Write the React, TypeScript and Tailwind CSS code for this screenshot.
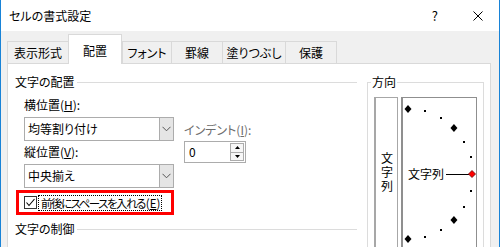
import React from "react";

const Tab = ({ w, label, selected }: { w: string; label: string; selected?: boolean }) =>
  selected ? (
    <div className={`${w} h-[30px] -mb-px bg-white border-x border-t border-[#d9d9d9] flex items-end justify-center pb-[5px]`}>
      {label}
    </div>
  ) : (
    <div className={`${w} h-[22px] bg-[#f0f0f0] border-l border-t border-[#d9d9d9] flex items-center justify-center`}>
      {label}
    </div>
  );

const Chevron = () => (
  <svg width="9" height="6" viewBox="0 0 9 6">
    <polyline points="0.5,0.8 4.5,4.8 8.5,0.8" fill="none" stroke="#555" strokeWidth="1" />
  </svg>
);

const Dropdown = ({ value }: { value: string }) => (
  <div className="h-[24px] w-[150px] border border-[#acacac] bg-white flex">
    <div className="flex-1 flex items-center pl-[3px]">{value}</div>
    <div className="w-[14px] bg-[#e5e5e5] border-l border-[#acacac] flex items-center justify-center">
      <Chevron />
    </div>
  </div>
);

const Gauge = () => {
  const cx = 5;
  const cy = 76;
  const r = 65;
  const items: React.ReactNode[] = [];
  for (let a = 90; a >= -90; a -= 15) {
    const rad = (a * Math.PI) / 180;
    const x = cx + r * Math.cos(rad);
    const y = cy - r * Math.sin(rad);
    if (a === 0) continue;
    if (a % 45 === 0) {
      items.push(
        <polygon
          key={a}
          points={`${x},${y - 4} ${x + 3.5},${y} ${x},${y + 4} ${x - 3.5},${y}`}
          fill="#000"
        />
      );
    } else {
      items.push(<rect key={a} x={Math.round(x) - 1} y={Math.round(y) - 1} width="2" height="2" fill="#000" />);
    }
  }
  return (
    <svg className="absolute left-0 top-0" width="74" height="160" viewBox="0 0 74 160">
      {items}
      <line x1="43" y1="76.5" x2="66" y2="76.5" stroke="#000" strokeWidth="1" />
      <polygon points="69,72.5 72.5,76 69,79.5 65.5,76" fill="#ff0000" stroke="#600" strokeWidth="0.8" />
    </svg>
  );
};

export default function App() {
  return (
    <div className="w-[500px] h-[247px] overflow-hidden bg-[#f0f0f0] border-x border-[#1883d7] flex flex-col font-['Noto_Sans_CJK_JP','Noto_Sans',sans-serif] text-[12px] leading-[16px] text-black [font-feature-settings:'palt']">
      {/* title bar */}
      <div className="h-[31px] shrink-0 bg-white flex items-center">
        <span className="pl-[8px]">セルの書式設定</span>
        <div className="flex-1" />
        <span className="text-[13px]">?</span>
        <svg className="ml-[35px] mr-[16px]" width="10" height="10" viewBox="0 0 10 10">
          <path d="M0.5 0.5 L9.5 9.5 M9.5 0.5 L0.5 9.5" stroke="#000" strokeWidth="1" fill="none" />
        </svg>
      </div>

      {/* tabs */}
      <div className="h-[32px] shrink-0 flex items-end pl-[6px] relative z-10">
        <Tab w="w-[61px]" label="表示形式" />
        <Tab w="w-[54px]" label="配置" selected />
        <Tab w="w-[49px]" label="フォント" />
        <Tab w="w-[51px]" label="罫線" />
        <Tab w="w-[63px]" label="塗りつぶし" />
        <div className="w-[52px] h-[22px] bg-[#f0f0f0] border-x border-t border-[#d9d9d9] flex items-center justify-center">
          保護
        </div>
      </div>

      {/* panel */}
      <div className="flex-1 ml-[6px] w-[484px] bg-white border border-b-0 border-[#d9d9d9] flex overflow-hidden">
        {/* left column */}
        <div className="w-[349px] flex flex-col shrink-0">
          <div className="flex items-center mt-[10px] pl-[7px]">
            <span>文字の配置</span>
            <div className="flex-1 h-px bg-[#dcdcdc] ml-[2px]" />
          </div>

          <div className="flex pl-[16px] mt-[7px]">
            <div className="w-[150px] flex flex-col">
              <span>
                横位置(<span className="underline">H</span>):
              </span>
              <div className="mt-[4px]">
                <Dropdown value="均等割り付け" />
              </div>
              <span className="mt-[3px]">
                縦位置(<span className="underline">V</span>):
              </span>
              <div className="mt-[4px]">
                <Dropdown value="中央揃え" />
              </div>
            </div>
            <div className="ml-[10px] flex flex-col">
              <span className="mt-[25px] text-[#6d6d6d]">
                インデント(<span className="underline">I</span>):
              </span>
              <div className="mt-[3px] w-[62px] h-[22px] border border-[#acacac] flex">
                <div className="flex-1 flex items-center pl-[4px]">0</div>
                <div className="w-[14px] my-[1px] mr-[1px] flex flex-col">
                  <div className="flex-1 border border-[#acacac] bg-[#f7f7f7] flex items-center justify-center">
                    <svg width="5" height="3" viewBox="0 0 5 3">
                      <polygon points="2.5,0 5,3 0,3" fill="#000" />
                    </svg>
                  </div>
                  <div className="flex-1 border border-t-0 border-[#acacac] bg-[#f7f7f7] flex items-center justify-center">
                    <svg width="5" height="3" viewBox="0 0 5 3">
                      <polygon points="0,0 5,0 2.5,3" fill="#000" />
                    </svg>
                  </div>
                </div>
              </div>
            </div>
          </div>

          <div className="ml-[8px] mt-[2px] w-[158px] h-[25px] border-[3px] border-[#ff0000] flex items-center pl-[5px]">
            <div className="w-[13px] h-[13px] border border-[#333] bg-white flex items-center justify-center shrink-0">
              <svg width="11" height="11" viewBox="0 0 11 11">
                <polyline points="1.5,5.5 4,8.5 9.5,2" fill="none" stroke="#000" strokeWidth="1.1" />
              </svg>
            </div>
            <div className="ml-[1px] border border-dotted border-black pl-[2px] pr-px leading-[14px] whitespace-nowrap text-[11.5px]">
              <span className="tracking-[-1.5px]">前後にスペースを入れる</span>
              <span className="ml-[1px]">
                (<span className="underline">E</span>)
              </span>
            </div>
          </div>

          <div className="flex items-center mt-[6px] pl-[7px]">
            <span>文字の制御</span>
            <div className="flex-1 h-px bg-[#dcdcdc] ml-[2px]" />
          </div>
        </div>

        {/* orientation group */}
        <div className="relative ml-[10px] mt-[18px] w-[117px] h-[200px] border border-b-0 border-[#dcdcdc] shrink-0">
          <span className="absolute -top-[9px] left-[3px] bg-white px-px">方向</span>
          <div className="flex pl-[6px] pt-[14px]">
            <div className="w-[24px] h-[160px] border-t border-r border-l-2 border-[#a7a7a7] flex justify-center pt-[54px]">
              <span className="[writing-mode:vertical-rl] tracking-[2px] leading-[14px]">文字列</span>
            </div>
            <div className="relative ml-[3px] w-[76px] h-[160px] border-t border-r border-l-2 border-[#8f8f8f]">
              <Gauge />
              <span className="absolute left-[5px] top-[68px] leading-[16px] text-[12px]">文字列</span>
            </div>
          </div>
        </div>
      </div>
    </div>
  );
}
